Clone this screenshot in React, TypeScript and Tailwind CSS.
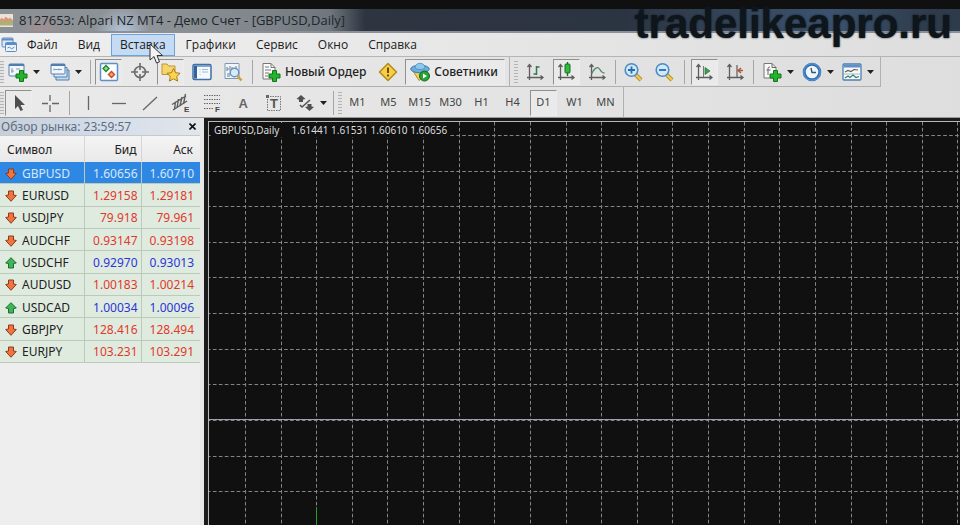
import type { ReactNode } from 'react';
import { useState } from 'react';
import clsx from 'clsx';

type Quote = {
    symbol: string;
    bid: string;
    ask: string;
    direction: 'up' | 'down';
};

const quotes: Quote[] = [
    { symbol: 'GBPUSD', bid: '1.60656', ask: '1.60710', direction: 'down' },
    { symbol: 'EURUSD', bid: '1.29158', ask: '1.29181', direction: 'down' },
    { symbol: 'USDJPY', bid: '79.918', ask: '79.961', direction: 'down' },
    { symbol: 'AUDCHF', bid: '0.93147', ask: '0.93198', direction: 'down' },
    { symbol: 'USDCHF', bid: '0.92970', ask: '0.93013', direction: 'up' },
    { symbol: 'AUDUSD', bid: '1.00183', ask: '1.00214', direction: 'down' },
    { symbol: 'USDCAD', bid: '1.00034', ask: '1.00096', direction: 'up' },
    { symbol: 'GBPJPY', bid: '128.416', ask: '128.494', direction: 'down' },
    { symbol: 'EURJPY', bid: '103.231', ask: '103.291', direction: 'down' },
];

const menuItems = [
    'Файл',
    'Вид',
    'Вставка',
    'Графики',
    'Сервис',
    'Окно',
    'Справка',
];

const timeframes = ['M1', 'M5', 'M15', 'M30', 'H1', 'H4', 'D1', 'W1', 'MN'];

function Icon({ children }: { children: ReactNode }) {
    return (
        <svg
            viewBox="0 0 20 20"
            className="size-5 shrink-0"
            fill="none"
            aria-hidden="true"
        >
            {children}
        </svg>
    );
}

function Plus() {
    return (
        <path
            d="M11.500 8.500h4v3.500h3.500v4h-3.500v3.500h-4V16H8v-4h3.500z"
            fill="#22b52c"
            stroke="#12751c"
        />
    );
}

function NewChartIcon() {
    return (
        <Icon>
            <rect x="1" y="2" width="15" height="12" rx="1" fill="#f3f7fb" stroke="#4f7fb0" />
            <path d="M1 3h15" stroke="#4f7fb0" strokeWidth="2" />
            <path d="M4 6v5M3 9h3M8 7h4" stroke="#7b9cc0" />
            <Plus />
        </Icon>
    );
}

function ProfilesIcon() {
    return (
        <Icon>
            <path d="M6 8h13v10H6z" fill="#c8daed" stroke="#4f7fb0" />
            <path d="M4 5.500h13v9.500H4z" fill="#dbe8f5" stroke="#4f7fb0" />
            <rect x="1" y="2" width="14" height="10" rx="1" fill="#f3f7fb" stroke="#4f7fb0" />
            <path d="M1 3h14" stroke="#4f7fb0" strokeWidth="2" />
            <path d="M4 7.500h8M4 6.500v2M9 6.500v2" stroke="#7b9cc0" />
        </Icon>
    );
}

function MarketWatchIcon() {
    return (
        <Icon>
            <rect x="1.500" y="1.500" width="17" height="17" rx="1" fill="#fbfdff" stroke="#5b92c8" strokeWidth="1.500" />
            <path d="M7 3.500L10 6.500 7 9.500 4 6.500z" fill="#8fdc92" stroke="#1f8a2c" strokeWidth="1.400" />
            <path d="M12.500 9.500l3 3-3 3-3-3z" fill="#f6a27c" stroke="#cc4a1f" strokeWidth="1.400" />
        </Icon>
    );
}

function DataWindowIcon() {
    return (
        <Icon>
            <circle cx="10" cy="10" r="5.500" stroke="#6a6a6a" strokeWidth="1.600" />
            <path d="M10 1v7M10 12v7M1 10h7M12 10h7" stroke="#6a6a6a" strokeWidth="1.600" />
        </Icon>
    );
}

function NavigatorIcon() {
    return (
        <Icon>
            <path d="M1 2h5l1.500 2H14v8.500H1z" fill="#f6d66c" stroke="#c2962a" />
            <path
                d="M12.500 6.500l2 4.200 4.600.6-3.400 3.200.9 4.600-4.100-2.300-4.100 2.300.9-4.600-3.400-3.200 4.600-.6z"
                fill="#fbd54e"
                stroke="#a97b1a"
            />
        </Icon>
    );
}

function TerminalIcon() {
    return (
        <Icon>
            <rect x="1" y="2.500" width="18" height="15" rx="1.500" fill="#f5f9fd" stroke="#3f6fa6" strokeWidth="1.500" />
            <path d="M2 3.500h3v13H2z" fill="#346298" />
            <path d="M5 4h13" stroke="#5b8cc0" strokeWidth="1.500" />
            <path d="M7.500 7.500h1M10 7.500h6M7.500 10h1M10 10h6M7.500 12.500h1" stroke="#9fbbd8" />
        </Icon>
    );
}

function TesterIcon() {
    return (
        <Icon>
            <path d="M2 1.500h14v15H2z" fill="#f3f6f9" stroke="#7d97b3" />
            <path d="M4 5v4M4 7h2M7 4v5M9 5v3M13 4v4M4 12h3M4 14h3" stroke="#64809c" />
            <circle cx="11.500" cy="10.500" r="4.300" fill="#d5e9f8" fillOpacity=".9" stroke="#6b93bb" strokeWidth="1.500" />
            <path d="M14.500 14l4 4.500" stroke="#cba038" strokeWidth="2.500" />
        </Icon>
    );
}

function NewOrderIcon() {
    return (
        <Icon>
            <path d="M2 1.500h8l4 4V17H2z" fill="#fafafa" stroke="#777" />
            <path d="M10 1.500v4h4M4 5h4M4 8h6M4 11h4M4 14h3" stroke="#777" />
            <Plus />
        </Icon>
    );
}

function WarningIcon() {
    return (
        <Icon>
            <path d="M10 1.500l8.500 8.500-8.500 8.500L1.500 10z" fill="#f8ce45" stroke="#b48a1d" strokeWidth="1.500" strokeLinejoin="round" />
            <path d="M10 5.500v5.500M10 12.500v2" stroke="#6e4c08" strokeWidth="2" />
        </Icon>
    );
}

function ExpertsIcon() {
    return (
        <Icon>
            <path d="M3 9l6 9.500 8-6V8z" fill="#f4cf55" stroke="#b78f24" />
            <ellipse cx="10" cy="7" rx="9.300" ry="3.800" fill="#68aede" stroke="#3a79aa" />
            <path d="M5 6C5-.3 15-.3 15 6c-2 2-8 2-10 0z" fill="#8cc7ee" stroke="#4a8bbb" strokeWidth=".8" />
            <circle cx="14.500" cy="14" r="5" fill="#25a334" stroke="#14691e" />
            <path d="M13 11.500l4 2.500-4 2.500z" fill="#fff" />
        </Icon>
    );
}

/** Shared pair of axes under the chart type icons. */
function Axes() {
    return (
        <path
            d="M4.500 3v15M2 15.500h16M2.500 5l2-2.500 2 2.500M15.500 13.500l2.500 2-2.500 2"
            stroke="#5d5d5d"
            strokeWidth="1.300"
        />
    );
}

function BarsIcon() {
    return (
        <Icon>
            <Axes />
            <path d="M11.500 4v9M8.500 12h3M11.500 5h3" stroke="#327a4c" strokeWidth="1.500" />
        </Icon>
    );
}

function CandlesIcon() {
    return (
        <Icon>
            <Axes />
            <path d="M11.500 0v14" stroke="#176d22" strokeWidth="1.300" />
            <rect x="9" y="2" width="5" height="9" rx="1" fill="#2fbc3c" stroke="#14701f" />
        </Icon>
    );
}

function LineIcon() {
    return (
        <Icon>
            <Axes />
            <path d="M4.500 12c3-6 6-8 8-5 1.500 2.500 3 4 5 4" stroke="#4f8864" strokeWidth="1.300" />
        </Icon>
    );
}

function ZoomIcon({ plus = false }: { plus?: boolean }) {
    return (
        <Icon>
            <path d="M13 13l5 5" stroke="#a98024" strokeWidth="4" />
            <path d="M13 13l5 5" stroke="#ecc550" strokeWidth="2.500" />
            <circle cx="8.500" cy="8" r="6.300" fill="#cfe8fa" stroke="#4e8cc0" strokeWidth="1.600" />
            <path d={plus ? 'M5 8h7M8.500 4.500v7' : 'M5 8h7'} stroke="#2a6cab" strokeWidth="1.800" />
        </Icon>
    );
}

function AutoScrollIcon() {
    return (
        <Icon>
            <Axes />
            <path d="M9.500 4v11" stroke="#777" />
            <path d="M11 5.500l5 3.500-5 3.500z" fill="#39a052" stroke="#22733a" strokeWidth=".7" />
        </Icon>
    );
}

function ChartShiftIcon() {
    return (
        <Icon>
            <Axes />
            <path d="M12 3v12" stroke="#666" strokeWidth="1.300" />
            <path d="M18 8.500h-4M16 6l-3 2.500 3 2.500" stroke="#b45438" strokeWidth="1.500" />
        </Icon>
    );
}

function IndicatorsIcon() {
    return (
        <Icon>
            <path d="M2 1.500h8l4 4V16H2z" fill="#f8f8f8" stroke="#777" />
            <path d="M10 1.500v4h4M8 5c-2 0-2 1-2 3v5M4.500 8h4" stroke="#666" />
            <Plus />
        </Icon>
    );
}

function PeriodsIcon() {
    return (
        <Icon>
            <circle cx="10" cy="10" r="7.800" fill="#eef6fd" stroke="#2f6fb3" strokeWidth="3" />
            <circle cx="10" cy="10" r="8.300" stroke="#6aa5dc" strokeWidth=".8" />
            <path d="M9 6l1 4.500h4" stroke="#3a556f" strokeWidth="1.400" />
        </Icon>
    );
}

function TemplatesIcon() {
    return (
        <Icon>
            <rect x="1" y="2" width="18" height="16" rx="1" fill="#f6f9fc" stroke="#4f7fb0" strokeWidth="1.300" />
            <path d="M1.500 4h17" stroke="#5d91c8" strokeWidth="3" />
            <path d="M3 10l3-1.500 3 1 3-2 4 .5" stroke="#665b4c" strokeWidth="1.200" />
            <path d="M2 12h16" stroke="#9fb8d2" />
            <path d="M3 16l3-2 2 1.500 3-2.500 3 2.500 3-1" stroke="#36805a" strokeWidth="1.200" />
        </Icon>
    );
}

function CursorIcon() {
    return (
        <Icon>
            <path d="M6 2v14l3-3 2.500 5 2.500-1-2.500-5H16z" fill="#4e4e4e" />
        </Icon>
    );
}

function CrosshairIcon() {
    return (
        <Icon>
            <path d="M10 2v6M10 12v7M2 10.500h6M12 10.500h7" stroke="#666" strokeWidth="1.300" />
        </Icon>
    );
}

function VerticalLineIcon() {
    return (
        <Icon>
            <path d="M10.500 3v14" stroke="#666" strokeWidth="1.300" />
        </Icon>
    );
}

function HorizontalLineIcon() {
    return (
        <Icon>
            <path d="M3 10.500h14" stroke="#666" strokeWidth="1.300" />
        </Icon>
    );
}

function TrendLineIcon() {
    return (
        <Icon>
            <path d="M3 17L17 4" stroke="#666" strokeWidth="1.300" />
        </Icon>
    );
}

function ChannelIcon() {
    return (
        <Icon>
            <path
                d="M1 11.500L15 3M2 17L16 8M4.500 8.500l-1 8M7.500 6l-1.500 9M11 4l-2 9M14.500 1l-2 10"
                stroke="#5c5c5c"
                strokeWidth="1.400"
            />
            <text x="13" y="19" fontSize="8" fontWeight="700" fill="#444" fontFamily="Liberation Sans, sans-serif">
                E
            </text>
        </Icon>
    );
}

function FibonacciIcon() {
    return (
        <Icon>
            <path
                d="M2 2.500h16M2 6.500h16M2 10.500h16M2 15.500h9"
                stroke="#666"
                strokeWidth="1.200"
                strokeDasharray="1.500 1"
            />
            <text x="13" y="19" fontSize="8" fontWeight="700" fill="#444" fontFamily="Liberation Sans, sans-serif">
                F
            </text>
        </Icon>
    );
}

function TextIcon() {
    return (
        <Icon>
            <text x="5.500" y="15" fontSize="13" fontWeight="700" fill="#666" fontFamily="Liberation Sans, sans-serif">
                A
            </text>
        </Icon>
    );
}

function LabelIcon() {
    return (
        <Icon>
            <rect x="3.500" y="3.500" width="13" height="14" stroke="#777" strokeDasharray="1.500 1" />
            <path d="M2 2h3v3H2z" fill="#666" />
            <text x="6" y="15" fontSize="13" fontWeight="700" fill="#555" fontFamily="Liberation Sans, sans-serif">
                T
            </text>
        </Icon>
    );
}

function ArrowsIcon() {
    return (
        <Icon>
            <path d="M6 2l4.500 4L8 6.500V9H4V6.500L1.500 6zM14.500 18L10 14l2.500-.5V11h4v2.500l2.500.5z" fill="#505050" />
            <path d="M5 12l2 2L15 7" stroke="#505050" strokeWidth="1.500" />
        </Icon>
    );
}

function DirectionIcon({ direction }: { direction: Quote['direction'] }) {
    return (
        <svg viewBox="0 0 12 12" className="size-3 shrink-0" aria-hidden="true">
            {direction === 'up' ? (
                <path
                    d="M6 .7L11.300 6 8.500 6.500V11h-5V6.500L.7 6z"
                    fill="#3fb558"
                    stroke="#1f6b34"
                />
            ) : (
                <path
                    d="M6 11.300L.7 5.500l2.800-.5V1h5v4l2.800.5z"
                    fill="#ee7440"
                    stroke="#8f3a1a"
                />
            )}
        </svg>
    );
}

function ToolButton({
    label,
    pressed = false,
    onClick,
    children,
}: {
    label: string;
    pressed?: boolean;
    onClick?: () => void;
    children: ReactNode;
}) {
    return (
        <button
            type="button"
            aria-label={label}
            aria-pressed={pressed}
            onClick={onClick}
            className={clsx(
                'flex h-[26px] w-[27px] shrink-0 items-center justify-center border',
                pressed
                    ? 'border-t-[#909090] border-r-[#ededed] border-b-[#ededed] border-l-[#909090] bg-[#eaeaea]'
                    : 'border-transparent',
            )}
        >
            {children}
        </button>
    );
}

function MenuButton({ label, children }: { label: string; children: ReactNode }) {
    return (
        <button
            type="button"
            aria-label={label}
            aria-haspopup="menu"
            className="flex h-[26px] w-8 shrink-0 items-center justify-between"
        >
            {children}
            <svg viewBox="0 0 7 4" className="h-1 w-[7px]" aria-hidden="true">
                <path d="M0 0h7L3.500 4z" fill="#222" />
            </svg>
        </button>
    );
}

function Separator() {
    return <span className="mx-1 h-6 w-px shrink-0 bg-[#a6a6a6]" />;
}

function Grip() {
    return (
        <span className="h-[22px] w-1 shrink-0 bg-[repeating-linear-gradient(to_bottom,#b4b4b4_0_1px,#e4e4e4_1px_3px)]" />
    );
}

function TitleBar() {
    return (
        <header className="flex h-6 shrink-0 items-center border-b-2 border-[#8d8f98] bg-[radial-gradient(circle_at_122px_24px,#b4c6da_0px,transparent_28px),radial-gradient(circle_at_42px_26px,#a88f92_0px,transparent_22px),linear-gradient(to_right,#8b9094_0px,#8e9398_150px,#80868b_260px,#6f767d_330px,#2c3540_365px,#2b3441_620px,#3b536f_830px,#2e3b4a_930px)] pr-2">
            <svg viewBox="0 0 14 14" className="h-[15px] w-[13px] shrink-0" aria-hidden="true">
                <path d="M0 0h14v14H0z" fill="#e9e2d6" />
                <path d="M0 12V6l2-2 2 2 2-3 3 2 2-1 3 3v5z" fill="#dc9478" />
                <path d="M0 12V9l3-2 3 2 4-2 4 2v3z" fill="#a5b573" />
            </svg>
            <h1 className="ml-[6px] truncate font-['Open_Sans',sans-serif] text-[13px] leading-5 text-[#20262b]">
                8127653: Alpari NZ MT4 - Демо Счет - [GBPUSD,Daily]
            </h1>
        </header>
    );
}

function MenuBar() {
    return (
        <nav className="flex h-6 shrink-0 items-center border-b border-[#b5b5b5] bg-linear-to-r from-[#f0efef] to-[#dedede] pl-px">
            <svg viewBox="0 0 17 16" className="h-4 w-[17px] shrink-0" fill="none" aria-hidden="true">
                <rect x="1" y="1" width="11" height="9" rx="1" fill="#dbe9f8" stroke="#5d8dc2" />
                <path d="M1 2.500h11" stroke="#5d8dc2" strokeWidth="2" />
                <rect x="4.500" y="5.500" width="11" height="9" rx="1" fill="#eaf3fc" stroke="#5d8dc2" />
                <path d="M4.500 7h11" stroke="#5d8dc2" strokeWidth="2" />
                <path d="M6.500 11l2-1 2 2 3-2" stroke="#5d8dc2" />
            </svg>
            <div className="flex items-center gap-0.5">
                {menuItems.map((item) => (
                    <button
                        key={item}
                        type="button"
                        className={clsx(
                            "flex h-[22px] items-center border px-2 font-['Open_Sans',sans-serif] text-[12px] text-[#202020]",
                            item === 'Вставка'
                                ? 'border-[#6fa3d8] bg-[#c5dbf3]'
                                : 'border-transparent',
                        )}
                    >
                        {item}
                    </button>
                ))}
            </div>
        </nav>
    );
}

function StandardToolbar() {
    return (
        <div className="flex">
            <div className="flex h-[30px] items-center border-r border-b border-[#b0b0b0] pt-px">
                <Grip />
                <div className="flex items-center gap-[10px] px-1">
                    <MenuButton label="Новый график">
                        <NewChartIcon />
                    </MenuButton>
                    <MenuButton label="Профили">
                        <ProfilesIcon />
                    </MenuButton>
                </div>
                <Separator />
                <div className="flex items-center gap-1 pr-0.5">
                    <ToolButton label="Обзор рынка" pressed>
                        <MarketWatchIcon />
                    </ToolButton>
                    <ToolButton label="Окно данных">
                        <DataWindowIcon />
                    </ToolButton>
                    <ToolButton label="Навигатор" pressed>
                        <NavigatorIcon />
                    </ToolButton>
                    <ToolButton label="Терминал">
                        <TerminalIcon />
                    </ToolButton>
                    <ToolButton label="Тестер стратегий">
                        <TesterIcon />
                    </ToolButton>
                </div>
                <Separator />
                <button
                    type="button"
                    className="ml-1 flex h-[26px] shrink-0 items-center gap-1 font-['Noto_Sans',sans-serif] text-[12px] font-medium text-[#222]"
                >
                    <NewOrderIcon />
                    Новый Ордер
                </button>
                <div className="pr-1 pl-2">
                    <ToolButton label="Редактор">
                        <WarningIcon />
                    </ToolButton>
                </div>
                <button
                    type="button"
                    aria-pressed="true"
                    className="mr-1 flex h-[26px] shrink-0 items-center gap-1 border border-t-[#909090] border-r-[#ededed] border-b-[#ededed] border-l-[#909090] bg-[#eaeaea] pr-1.5 pl-1 font-['Noto_Sans',sans-serif] text-[12px] font-medium text-[#222]"
                >
                    <ExpertsIcon />
                    Советники
                </button>
            </div>
            <div className="flex h-[30px] items-center border-r border-b border-[#b0b0b0] pt-px pl-1">
                <Grip />
                <div className="flex items-center gap-1 pl-1">
                    <ToolButton label="Бары">
                        <BarsIcon />
                    </ToolButton>
                    <ToolButton label="Японские свечи" pressed>
                        <CandlesIcon />
                    </ToolButton>
                    <ToolButton label="Линия">
                        <LineIcon />
                    </ToolButton>
                </div>
                <Separator />
                <div className="flex items-center gap-1 pr-0.5">
                    <ToolButton label="Увеличить">
                        <ZoomIcon plus />
                    </ToolButton>
                    <ToolButton label="Уменьшить">
                        <ZoomIcon />
                    </ToolButton>
                </div>
                <Separator />
                <div className="flex items-center gap-1 pl-0.5">
                    <ToolButton label="Автопрокрутка" pressed>
                        <AutoScrollIcon />
                    </ToolButton>
                    <ToolButton label="Сдвиг графика">
                        <ChartShiftIcon />
                    </ToolButton>
                </div>
                <Separator />
                <div className="flex items-center gap-2 pr-1.5 pl-1">
                    <MenuButton label="Индикаторы">
                        <IndicatorsIcon />
                    </MenuButton>
                    <MenuButton label="Периоды">
                        <PeriodsIcon />
                    </MenuButton>
                    <MenuButton label="Шаблоны">
                        <TemplatesIcon />
                    </MenuButton>
                </div>
            </div>
        </div>
    );
}

function DrawingToolbar() {
    const [timeframe, setTimeframe] = useState('D1');

    return (
        <div className="flex">
            <div className="flex h-[30px] items-center pt-px">
                <Grip />
                <div className="flex items-center gap-1 pr-0.5 pl-px">
                    <ToolButton label="Курсор" pressed>
                        <CursorIcon />
                    </ToolButton>
                    <ToolButton label="Перекрестие">
                        <CrosshairIcon />
                    </ToolButton>
                </div>
                <Separator />
                <div className="flex items-center gap-1">
                    <ToolButton label="Вертикальная линия">
                        <VerticalLineIcon />
                    </ToolButton>
                    <ToolButton label="Горизонтальная линия">
                        <HorizontalLineIcon />
                    </ToolButton>
                    <ToolButton label="Трендовая линия">
                        <TrendLineIcon />
                    </ToolButton>
                    <ToolButton label="Канал">
                        <ChannelIcon />
                    </ToolButton>
                    <ToolButton label="Линии Фибоначчи">
                        <FibonacciIcon />
                    </ToolButton>
                    <ToolButton label="Текст">
                        <TextIcon />
                    </ToolButton>
                    <ToolButton label="Текстовая метка">
                        <LabelIcon />
                    </ToolButton>
                    <div className="pr-0.5 pl-1">
                        <MenuButton label="Стрелки">
                            <ArrowsIcon />
                        </MenuButton>
                    </div>
                </div>
                <Separator />
            </div>
            <div className="flex h-[30px] items-center border-r border-[#b0b0b0] pt-px">
                <Grip />
                <div className="flex items-center gap-1 pr-1 pl-0.5">
                    {timeframes.map((item) => (
                        <ToolButton
                            key={item}
                            label={item}
                            pressed={item === timeframe}
                            onClick={() => setTimeframe(item)}
                        >
                            <span className="font-['Noto_Sans',sans-serif] text-[11px] text-[#444]">
                                {item}
                            </span>
                        </ToolButton>
                    ))}
                </div>
            </div>
        </div>
    );
}

function MarketWatch() {
    const [selected, setSelected] = useState('GBPUSD');

    return (
        <aside className="flex w-[200px] shrink-0 flex-col bg-[#eeeeee] font-['Noto_Sans',sans-serif]">
            <div className="flex h-[18px] shrink-0 items-center justify-between border-b border-[#c9c9c9] bg-linear-to-r from-[#c6cfda] via-[#d3dde9] to-[#e2e6ec] pr-[2px] pl-px">
                <h2 className="text-[12px] leading-4 text-[#5d6c7e]">
                    Обзор рынка: 23:59:57
                </h2>
                <button
                    type="button"
                    aria-label="Закрыть"
                    className="flex size-[11px] items-center justify-center"
                >
                    <svg viewBox="0 0 7 7" className="size-[7px]" aria-hidden="true">
                        <path d="M.5.5l6 6M6.500.5l-6 6" stroke="#111" strokeWidth="1.600" />
                    </svg>
                </button>
            </div>
            <table className="h-[227px] w-full table-fixed border-collapse text-[12px] leading-4">
                <colgroup>
                    <col className="w-[84px]" />
                    <col className="w-[57px]" />
                    <col />
                </colgroup>
                <thead>
                    <tr className="h-[26px] bg-linear-to-b from-[#f4f4f4] to-[#e9e9e9] text-[#222]">
                        <th className="border-r border-[#d6d6d6] p-0 pt-px pl-[7px] text-left font-normal">
                            Символ
                        </th>
                        <th className="border-r border-[#d6d6d6] p-0 pt-px pr-1 text-right font-normal">
                            Бид
                        </th>
                        <th className="p-0 pt-px pr-[7px] text-right font-normal">Аск</th>
                    </tr>
                </thead>
                <tbody>
                    {quotes.map((quote) => (
                        <tr
                            key={quote.symbol}
                            onClick={() => setSelected(quote.symbol)}
                            className={clsx(
                                'border-b border-[#bccabc]',
                                quote.symbol === selected
                                    ? 'bg-[#2f87e4] text-[#d5e8fb]'
                                    : quote.direction === 'up'
                                      ? 'bg-[#e0ebdf] text-[#2b35d8]'
                                      : 'bg-[#e0ebdf] text-[#e0392c]',
                            )}
                        >
                            <td className="border-r border-[#bccabc] p-0 pt-0.5 pl-[5px]">
                                <span className="flex items-center gap-[5px]">
                                    <DirectionIcon direction={quote.direction} />
                                    <span
                                        className={clsx(
                                            quote.symbol !== selected && 'text-[#222]',
                                        )}
                                    >
                                        {quote.symbol}
                                    </span>
                                </span>
                            </td>
                            <td className="border-r border-[#bccabc] p-0 pt-0.5 pr-[3px] text-right">
                                {quote.bid}
                            </td>
                            <td className="p-0 pt-0.5 pr-[6px] text-right">{quote.ask}</td>
                        </tr>
                    ))}
                </tbody>
            </table>
        </aside>
    );
}

const gridStep = 35.62;
const gridLines = Array.from({ length: 60 }, (_, index) => index);

function Chart() {
    return (
        <main className="relative ml-1 min-w-0 flex-1 overflow-hidden border-t-[3px] border-l-4 border-[#1b1b1b] bg-[#101010]">
            <div className="h-full border-t border-l border-[#b8b8b8]">
                <svg className="h-full w-full" aria-hidden="true">
                    <g stroke="#858585" strokeDasharray="3.600 2.337">
                        {gridLines.map((index) => {
                            const x = Math.round(36 + index * gridStep) + 0.5;
                            return <line key={index} x1={x} y1={-6} x2={x} y2={2000} />;
                        })}
                        {gridLines.map((index) => {
                            const y = Math.round(13 + index * gridStep) + 0.5;
                            return <line key={index} x1={-2} y1={y} x2={2200} y2={y} />;
                        })}
                    </g>
                    <line x1="0" y1="297.500" x2="2200" y2="297.500" stroke="#a09fac" />
                    <line x1="107.500" y1="385" x2="107.500" y2="2000" stroke="#22a122" />
                </svg>
            </div>
            <p className="absolute top-0.5 left-1 flex gap-3 bg-[#101010] px-0.5 font-['Noto_Sans',sans-serif] text-[10px] leading-[14px] text-[#dcdcdc]">
                <span>GBPUSD,Daily</span>
                <span>1.61441 1.61531 1.60610 1.60656</span>
            </p>
        </main>
    );
}

export default function App() {
    return (
        <div className="relative flex h-screen flex-col overflow-hidden bg-linear-to-r from-[#ebeaea] to-[#dedede]">
            <div className="h-[9px] shrink-0 bg-[#101010]" />
            <TitleBar />
            <MenuBar />
            <StandardToolbar />
            <DrawingToolbar />
            <div className="flex min-h-0 flex-1 border-t border-[#9a9a9a]">
                <MarketWatch />
                <Chart />
            </div>

            <p className="absolute top-0 right-2 font-['Liberation_Sans',sans-serif] text-[42px] leading-[48px] font-bold text-[#0e151b] text-shadow-[0_0_2px_#0e151b]">
                tradelikeapro.ru
            </p>
            <svg
                viewBox="0 0 15 22"
                className="absolute top-[43px] left-[149px] h-[22px] w-[15px]"
                aria-hidden="true"
            >
                <path
                    d="M1 1v16l4-3.500L7.500 20l3-1.200L8 12.500h5.500z"
                    fill="#f4f4f4"
                    stroke="#333"
                />
            </svg>
        </div>
    );
}
